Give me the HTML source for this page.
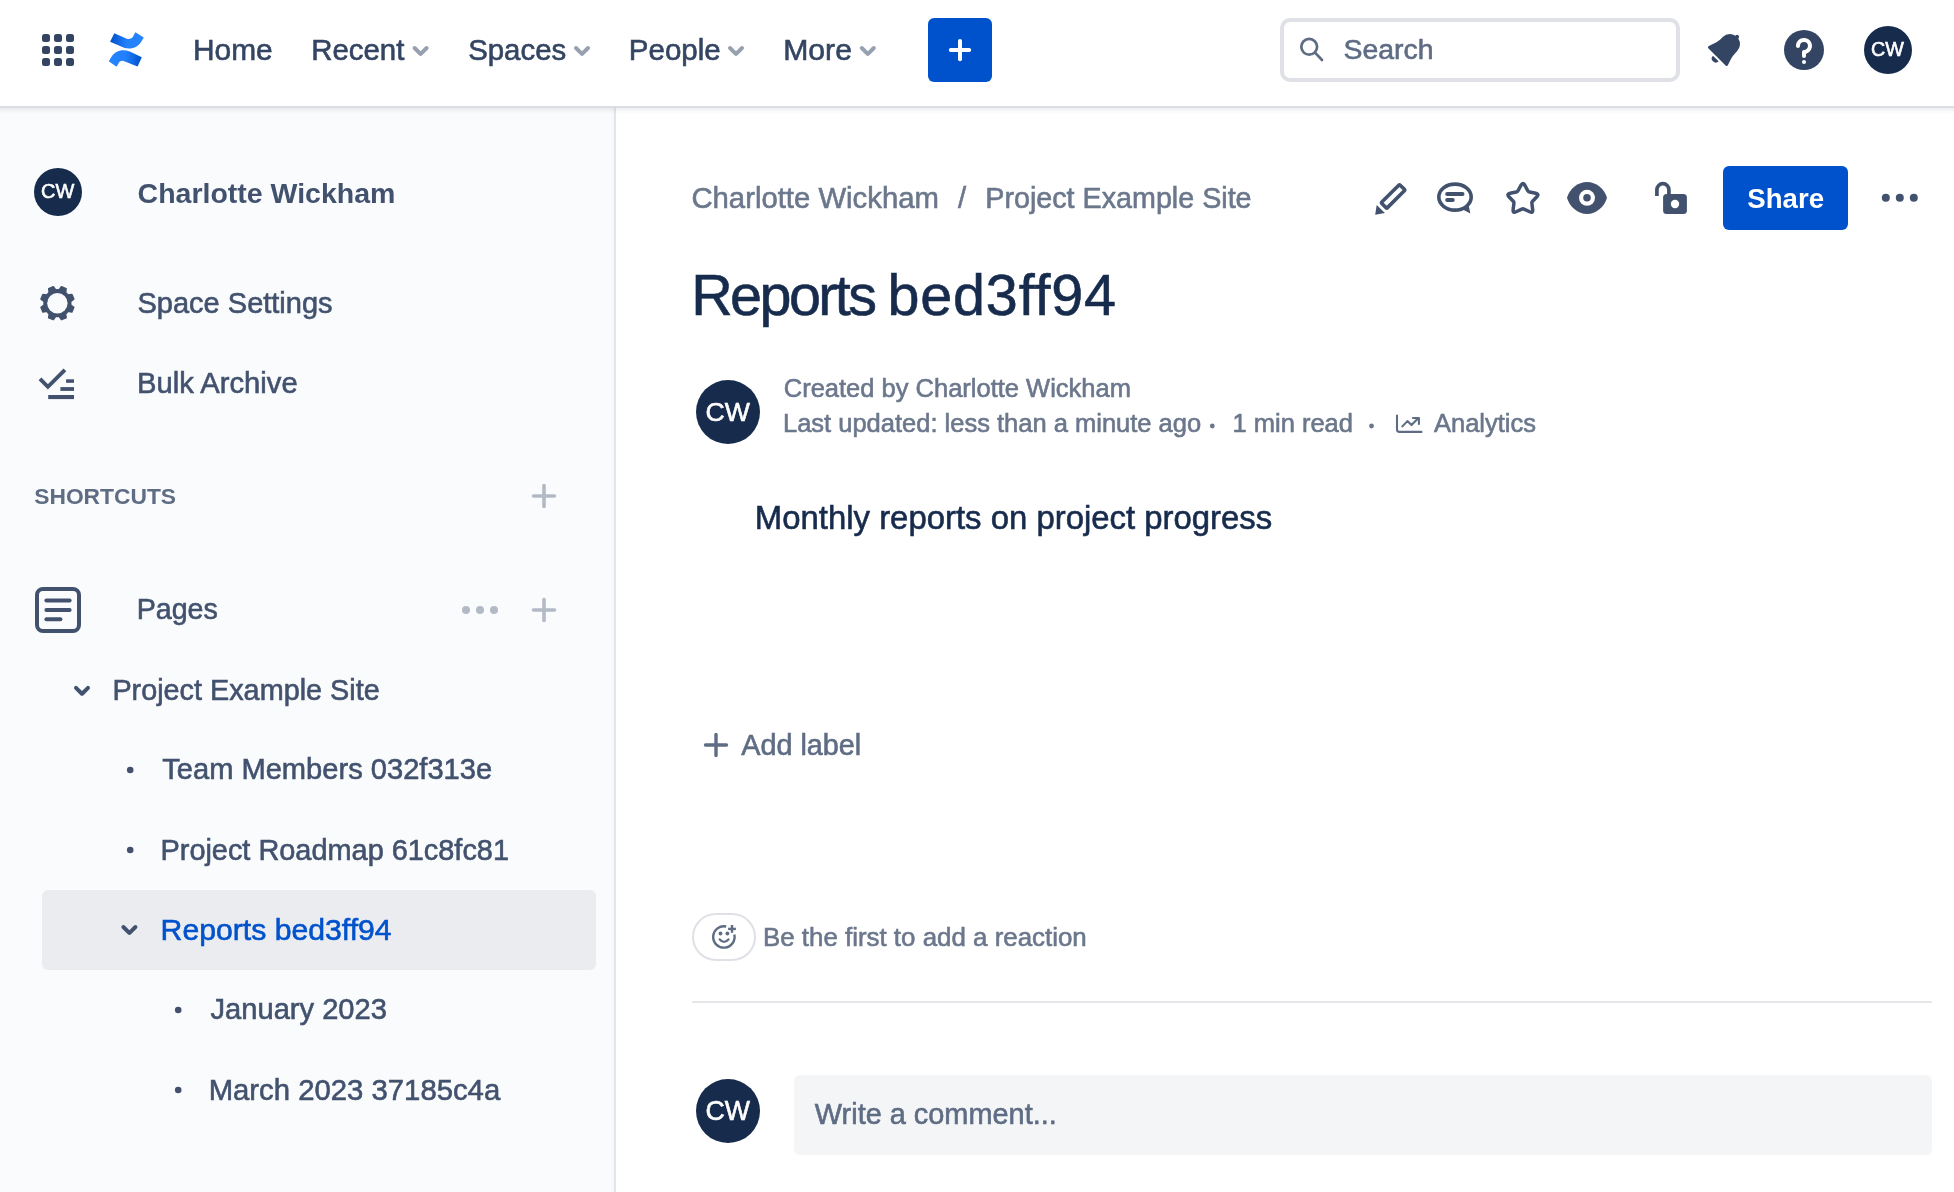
<!DOCTYPE html>
<html><head><meta charset="utf-8">
<style>
html,body{margin:0;padding:0;}
body{width:1954px;height:1192px;overflow:hidden;position:relative;background:#fff;font-family:"Liberation Sans",sans-serif;}
.t{position:absolute;white-space:nowrap;line-height:1;-webkit-text-stroke:0.6px currentColor;}
#txt{position:absolute;left:0;top:0;width:1954px;height:1192px;will-change:transform;}
.blk{position:absolute;}
#hdr{left:0;top:0;width:1954px;height:106px;background:#fff;}
#hdrline{left:0;top:106px;width:1954px;height:2px;background:#dadde3;}
#hdrshadow{left:0;top:108px;width:1954px;height:6px;background:linear-gradient(rgba(9,30,66,0.07),rgba(9,30,66,0));z-index:2;}
#side{left:0;top:108px;width:614px;height:1084px;background:#fafbfc;}
#sideline{left:614px;top:108px;width:2px;height:1084px;background:#e4e5e8;}
#sideshadow{left:610px;top:108px;width:4px;height:1084px;background:linear-gradient(to right,rgba(9,30,66,0),rgba(9,30,66,0.025));}
#sel{left:42px;top:890px;width:554px;height:80px;background:#ebecf0;border-radius:6px;}
#plusbtn{left:928px;top:18px;width:64px;height:64px;background:#0052cc;border-radius:6px;}
#search{left:1280px;top:18px;width:392px;height:56px;border:4px solid #dfe1e6;border-radius:10px;background:#fff;}
#share{left:1723px;top:166px;width:125px;height:64px;background:#0052cc;border-radius:6px;}
#react{left:692px;top:913px;width:60px;height:44px;border:2px solid #dfe1e6;border-radius:24px;}
#divider{left:692px;top:1001px;width:1240px;height:2px;background:#e4e6ea;}
#cbox{left:794px;top:1075px;width:1138px;height:80px;background:#f4f5f7;border-radius:6px;}
.av{position:absolute;border-radius:50%;background:#172b4d;color:#fff;text-align:center;font-family:"Liberation Sans",sans-serif;}
svg{position:absolute;left:0;top:0;}
</style></head><body>
<div class="blk" id="hdr"></div>
<div class="blk" id="hdrline"></div>
<div class="blk" id="side"></div>
<div class="blk" id="sideshadow"></div>
<div class="blk" id="sideline"></div>
<div class="blk" id="hdrshadow"></div>
<div class="blk" id="sel"></div>
<div class="blk" id="plusbtn"></div>
<div class="blk" id="search"></div>
<div class="blk" id="share"></div>
<div class="blk" id="react"></div>
<div class="blk" id="divider"></div>
<div class="blk" id="cbox"></div>

<svg width="1954" height="1192" viewBox="0 0 1954 1192">
<defs>
<linearGradient id="lgA" x1="111" y1="38" x2="143" y2="40" gradientUnits="userSpaceOnUse"><stop offset="0" stop-color="#0052cc"/><stop offset="0.5" stop-color="#2380fb"/><stop offset="1" stop-color="#2684ff"/></linearGradient>
<linearGradient id="lgB" x1="141" y1="62" x2="109" y2="58" gradientUnits="userSpaceOnUse"><stop offset="0" stop-color="#0052cc"/><stop offset="0.5" stop-color="#2380fb"/><stop offset="1" stop-color="#2684ff"/></linearGradient>
</defs>
<!-- apps grid -->
<g fill="#344563">
<rect x="42" y="34" width="8" height="8" rx="2.5"/><rect x="54" y="34" width="8" height="8" rx="2.5"/><rect x="66" y="34" width="8" height="8" rx="2.5"/>
<rect x="42" y="46" width="8" height="8" rx="2.5"/><rect x="54" y="46" width="8" height="8" rx="2.5"/><rect x="66" y="46" width="8" height="8" rx="2.5"/>
<rect x="42" y="58" width="8" height="8" rx="2.5"/><rect x="54" y="58" width="8" height="8" rx="2.5"/><rect x="66" y="58" width="8" height="8" rx="2.5"/>
</g>
<!-- logo -->
<path fill="url(#lgA)" d="M110.1,41.65 L114.3,33.2 L126.2,38.4 C129.5,39.6 131.8,38.6 133.2,36.2 L135.4,32.2 L143.7,37.6 L141.2,41.8 C138,46.8 132.5,49.8 124.7,48.1 Z"/>
<path fill="url(#lgB)" d="M108.8,61.2 L116.5,66.7 L118.6,63.2 C119.8,61.2 121.5,60.4 123.5,61.1 L137.6,66.4 L141.8,57.2 L129.8,51.6 C123,48.8 115.5,50 111,57.4 Z"/>
<!-- nav chevrons -->
<g fill="#97a0af">
<path transform="translate(396.6,26) scale(2)" d="M8.292 10.293a1.009 1.009 0 0 0 0 1.419l2.939 2.965c.218.215.5.322.779.322s.556-.107.769-.322l2.93-2.955a1.01 1.01 0 0 0 0-1.419.987.987 0 0 0-1.406 0l-2.298 2.317-2.307-2.327a.99.99 0 0 0-1.406 0z"/>
<path transform="translate(558,26) scale(2)" d="M8.292 10.293a1.009 1.009 0 0 0 0 1.419l2.939 2.965c.218.215.5.322.779.322s.556-.107.769-.322l2.93-2.955a1.01 1.01 0 0 0 0-1.419.987.987 0 0 0-1.406 0l-2.298 2.317-2.307-2.327a.99.99 0 0 0-1.406 0z"/>
<path transform="translate(712,26) scale(2)" d="M8.292 10.293a1.009 1.009 0 0 0 0 1.419l2.939 2.965c.218.215.5.322.779.322s.556-.107.769-.322l2.93-2.955a1.01 1.01 0 0 0 0-1.419.987.987 0 0 0-1.406 0l-2.298 2.317-2.307-2.327a.99.99 0 0 0-1.406 0z"/>
<path transform="translate(843.8,26) scale(2)" d="M8.292 10.293a1.009 1.009 0 0 0 0 1.419l2.939 2.965c.218.215.5.322.779.322s.556-.107.769-.322l2.93-2.955a1.01 1.01 0 0 0 0-1.419.987.987 0 0 0-1.406 0l-2.298 2.317-2.307-2.327a.99.99 0 0 0-1.406 0z"/>
</g>
<!-- plus in create button -->
<g stroke="#fff" stroke-width="4" stroke-linecap="round"><line x1="960" y1="40.9" x2="960" y2="59.2"/><line x1="950.8" y1="50" x2="969.2" y2="50"/></g>
<!-- search icon -->
<g fill="none" stroke="#5e6c84" stroke-width="2.7"><circle cx="1309.2" cy="46.8" r="7.9"/><line x1="1315" y1="52.6" x2="1322" y2="60" stroke-linecap="round"/></g>
<!-- bell -->
<path fill="#344563" transform="translate(1700,26) scale(2)" d="M6.485 17.669a2.001 2.001 0 0 0 2.829 0l-2.829-2.829a2 2 0 0 0 0 2.829m4.897-12.191l-.725.725c-.782.782-2.21 1.813-3.206 2.311l-3.017 1.509c-.495.248-.584.774-.187 1.171l8.556 8.556c.398.396.922.313 1.171-.188l1.508-3.017c.494-.988 1.526-2.42 2.311-3.205l.725-.726a5.048 5.048 0 0 0 .64-6.356 1.01 1.01 0 1 0-1.354-1.494c-.023.025-.046.049-.066.075a5.043 5.043 0 0 0-2.788-.84 5.036 5.036 0 0 0-3.588 1.479"/>
<!-- help -->
<g transform="translate(1780,26) scale(2)">
<circle fill="#344563" cx="12" cy="12" r="10"/><circle fill="#fff" cx="12" cy="18" r="1"/>
<path fill="#fff" d="M15.89 9.05a3.975 3.975 0 0 0-2.957-2.942C10.321 5.514 8.017 7.446 8 9.95l.005.147a.992.992 0 0 0 .982.904c.552 0 1-.447 1.002-.998a2.004 2.004 0 0 1 4.007-.002c0 1.102-.898 2-2.003 2H12a1 1 0 0 0-1 .987v2.014a1.001 1.001 0 0 0 2.004 0v-.782c0-.217.145-.399.35-.472A3.99 3.99 0 0 0 15.89 9.05"/>
</g>

<!-- sidebar gear -->
<g fill="#42526e" stroke="#42526e" stroke-width="1.6" stroke-linejoin="round" transform="translate(57.4,303.2)">
<circle r="14.1" stroke="none"/>
<polygon points="-3.9,-11 3.9,-11 2.5,-16.7 -2.5,-16.7" transform="rotate(22.5)"/><polygon points="-3.9,-11 3.9,-11 2.5,-16.7 -2.5,-16.7" transform="rotate(67.5)"/><polygon points="-3.9,-11 3.9,-11 2.5,-16.7 -2.5,-16.7" transform="rotate(112.5)"/><polygon points="-3.9,-11 3.9,-11 2.5,-16.7 -2.5,-16.7" transform="rotate(157.5)"/><polygon points="-3.9,-11 3.9,-11 2.5,-16.7 -2.5,-16.7" transform="rotate(202.5)"/><polygon points="-3.9,-11 3.9,-11 2.5,-16.7 -2.5,-16.7" transform="rotate(247.5)"/><polygon points="-3.9,-11 3.9,-11 2.5,-16.7 -2.5,-16.7" transform="rotate(292.5)"/><polygon points="-3.9,-11 3.9,-11 2.5,-16.7 -2.5,-16.7" transform="rotate(337.5)"/>
<circle r="10.2" fill="#fafbfc" stroke="none"/>
</g>
<!-- bulk archive -->
<g fill="none" stroke="#42526e" stroke-width="3.9">
<polyline points="40,378.9 47.9,386.8 64.9,369.9"/>
</g>
<g fill="#42526e">
<rect x="66.1" y="379.3" width="7.9" height="3.5"/>
<rect x="60.4" y="387.1" width="13.6" height="3.8"/>
<rect x="48.2" y="395" width="25.8" height="4.1"/>
</g>
<!-- shortcuts plus -->
<g stroke="#b3bac5" stroke-width="3.6" stroke-linecap="round">
<line x1="544" y1="485.5" x2="544" y2="506.5"/><line x1="533.5" y1="496" x2="554.5" y2="496"/>
<line x1="544" y1="599.5" x2="544" y2="620.5"/><line x1="533.5" y1="610" x2="554.5" y2="610"/>
</g>
<g fill="#b3bac5"><circle cx="466" cy="610" r="4"/><circle cx="480" cy="610" r="4"/><circle cx="494" cy="610" r="4"/></g>
<!-- pages icon -->
<rect x="37" y="589" width="42" height="42" rx="6" fill="none" stroke="#42526e" stroke-width="4"/>
<g stroke="#42526e" stroke-width="4" stroke-linecap="round">
<line x1="46.4" y1="600.4" x2="69.6" y2="600.4"/><line x1="46.4" y1="609.9" x2="69.6" y2="609.9"/><line x1="46.4" y1="619.2" x2="60.4" y2="619.2"/>
</g>
<!-- tree chevrons -->
<g fill="#42526e">
<path transform="translate(58,665.8) scale(2)" d="M8.292 10.293a1.009 1.009 0 0 0 0 1.419l2.939 2.965c.218.215.5.322.779.322s.556-.107.769-.322l2.93-2.955a1.01 1.01 0 0 0 0-1.419.987.987 0 0 0-1.406 0l-2.298 2.317-2.307-2.327a.99.99 0 0 0-1.406 0z"/>
<path transform="translate(105.4,905) scale(2)" d="M8.292 10.293a1.009 1.009 0 0 0 0 1.419l2.939 2.965c.218.215.5.322.779.322s.556-.107.769-.322l2.93-2.955a1.01 1.01 0 0 0 0-1.419.987.987 0 0 0-1.406 0l-2.298 2.317-2.307-2.327a.99.99 0 0 0-1.406 0z"/>
<circle cx="130.2" cy="770" r="3.3"/><circle cx="130.2" cy="850" r="3.3"/>
<circle cx="178.2" cy="1010" r="3.3"/><circle cx="178.2" cy="1090" r="3.3"/>
</g>

<!-- page action icons -->
<g fill="#42526e">
<!-- pencil -->
<rect x="-12.95" y="-3.95" width="25.9" height="7.9" rx="1" transform="translate(1393.1,196.4) rotate(-45)" fill="none" stroke="#42526e" stroke-width="3.6"/>
<polygon points="1376.7,205 1384.9,212.9 1375.2,214.7"/>
<!-- comment -->
<ellipse cx="1455" cy="197.1" rx="16.2" ry="13" fill="none" stroke="#42526e" stroke-width="3.6"/>
<polygon points="1461,208.6 1470.3,213.5 1468.5,204.5"/>
<!-- eye -->
<path d="M1567,197.8 C1569.5,188.5 1578,182 1587,182 C1596,182 1604.5,188.5 1607,197.8 C1604.5,207.1 1596,214 1587,214 C1578,214 1569.5,207.1 1567,197.8 Z"/>
<circle cx="1587" cy="197.8" r="8" fill="#fff"/><circle cx="1587" cy="197.8" r="3.8"/>
<!-- unlock body -->
<rect x="1663.1" y="194.1" width="23.8" height="19.8" rx="3.5"/>
<circle cx="1675" cy="204" r="4.2" fill="#fff"/>
<!-- dots -->
<circle cx="1885.8" cy="197.8" r="4"/><circle cx="1899.8" cy="197.8" r="4"/><circle cx="1913.8" cy="197.8" r="4"/>
</g>
<g stroke="#42526e" stroke-width="3.8" stroke-linecap="round" fill="none">
<line x1="1447.1" y1="194" x2="1462.6" y2="194"/><line x1="1447.1" y1="200" x2="1452.8" y2="200"/>
</g>
<path d="M14.3,38.3" fill="none"/>
<path id="star" fill="none" stroke="#42526e" stroke-width="3.5" stroke-linejoin="round" d="M1521.06,185.22 Q1522.90,181.90 1524.74,185.22 L1527.79,190.73 Q1528.37,191.78 1529.54,192.00 L1535.72,193.20 Q1539.45,193.92 1536.86,196.70 L1532.56,201.30 Q1531.74,202.17 1531.89,203.36 L1532.66,209.61 Q1533.13,213.38 1529.68,211.77 L1523.99,209.11 Q1522.90,208.60 1521.81,209.11 L1516.12,211.77 Q1512.67,213.38 1513.14,209.61 L1513.91,203.36 Q1514.06,202.17 1513.24,201.30 L1508.94,196.70 Q1506.35,193.92 1510.08,193.20 L1516.26,192.00 Q1517.43,191.78 1518.01,190.73 Z"/>
<path d="M1656.9,196 V189.7 A6,6 0 0 1 1668.9,189.7 V195" fill="none" stroke="#42526e" stroke-width="3.7"/>
<!-- analytics -->
<g fill="none" stroke="#5e6c84" stroke-width="2.1" stroke-linecap="round" stroke-linejoin="round">
<path d="M1397,415.5 V429.5 Q1397,431.9 1399.4,431.9 H1421.5"/>
<path d="M1402.4,426.4 L1407.4,421.1 L1411.5,425.1 L1417.9,418.4"/>
<path d="M1413,418 H1418.9 V423.9"/>
</g>
<!-- meta dots -->
<g fill="#6b778c"><circle cx="1212.3" cy="426" r="2.4"/><circle cx="1371.5" cy="426" r="2.4"/></g>
<!-- add label plus -->
<g stroke="#5e6c84" stroke-width="3.4" stroke-linecap="round"><line x1="716" y1="734.5" x2="716" y2="755.5"/><line x1="705.5" y1="745" x2="726.5" y2="745"/></g>
<!-- emoji -->
<g fill="none" stroke="#5e6c84" stroke-width="2.4" stroke-linecap="butt">
<path d="M734.3,934.5 A10.7,10.7 0 1 1 726.2,926.5"/>
<path d="M719.8,939.5 Q724,944.3 728.4,939.5" stroke-linecap="round"/>
<line x1="732" y1="925" x2="732" y2="932.8"/><line x1="728.1" y1="928.9" x2="735.9" y2="928.9"/>
</g>
<g fill="#5e6c84"><circle cx="720.5" cy="933.5" r="1.9"/><circle cx="727.4" cy="933.5" r="1.9"/></g>
</svg>

<div class="av" style="left:1864px;top:26px;width:48px;height:48px;"></div>
<div class="av" style="left:34px;top:168px;width:48px;height:48px;"></div>
<div class="av" style="left:696px;top:380px;width:64px;height:64px;"></div>
<div class="av" style="left:696px;top:1079px;width:64px;height:64px;"></div>
<div id="txt"><div class="t" style="left:193.01px;top:34.88px;font-size:29.9px;color:#344563;">Home</div>
<div class="t" style="left:311.25px;top:35.31px;font-size:29.4px;color:#344563;">Recent</div>
<div class="t" style="left:468.18px;top:35.31px;font-size:29.4px;color:#344563;">Spaces</div>
<div class="t" style="left:628.84px;top:35.22px;font-size:29.5px;color:#344563;">People</div>
<div class="t" style="left:783.18px;top:34.63px;font-size:30.2px;color:#344563;">More</div>
<div class="t" style="left:1343.52px;top:34.95px;font-size:28.4px;color:#5e6c84;">Search</div>
<div class="t" style="left:137.56px;top:179.07px;font-size:28.5px;color:#42526e;font-weight:bold;-webkit-text-stroke:0;">Charlotte Wickham</div>
<div class="t" style="left:137.50px;top:288.95px;font-size:29.0px;color:#42526e;">Space Settings</div>
<div class="t" style="left:137.06px;top:369.28px;font-size:29.2px;color:#42526e;">Bulk Archive</div>
<div class="t" style="left:34.22px;top:485.10px;font-size:22.8px;color:#5e6c84;font-weight:bold;-webkit-text-stroke:0;">SHORTCUTS</div>
<div class="t" style="left:136.71px;top:595.38px;font-size:28.6px;color:#42526e;">Pages</div>
<div class="t" style="left:112.40px;top:675.52px;font-size:28.8px;color:#42526e;">Project Example Site</div>
<div class="t" style="left:162.22px;top:755.36px;font-size:29.1px;color:#42526e;">Team Members 032f313e</div>
<div class="t" style="left:160.49px;top:835.83px;font-size:28.9px;color:#42526e;">Project Roadmap 61c8fc81</div>
<div class="t" style="left:160.58px;top:915.23px;font-size:30.2px;color:#0052cc;">Reports bed3ff94</div>
<div class="t" style="left:210.56px;top:995.36px;font-size:29.1px;color:#42526e;">January 2023</div>
<div class="t" style="left:208.66px;top:1075.19px;font-size:29.3px;color:#42526e;">March 2023 37185c4a</div>
<div class="t" style="left:691.43px;top:183.19px;font-size:29.3px;color:#6b778c;">Charlotte Wickham</div>
<div class="t" style="left:957.90px;top:183.19px;font-size:29.3px;color:#6b778c;">/</div>
<div class="t" style="left:985.30px;top:183.70px;font-size:28.7px;color:#6b778c;">Project Example Site</div>
<div class="t" style="left:691.20px;top:267.31px;font-size:57.5px;color:#172b4d;letter-spacing:-2.590px;">Reports</div>
<div class="t" style="left:887.46px;top:267.31px;font-size:57.5px;color:#172b4d;letter-spacing:0.821px;">bed3ff94</div>
<div class="t" style="left:1747.37px;top:184.73px;font-size:27.6px;color:#ffffff;font-weight:bold;-webkit-text-stroke:0;">Share</div>
<div class="t" style="left:783.73px;top:375.51px;font-size:25.5px;color:#6b778c;">Created by Charlotte Wickham</div>
<div class="t" style="left:782.96px;top:411.41px;font-size:25.5px;color:#6b778c;">Last updated: less than a minute ago</div>
<div class="t" style="left:1232.49px;top:411.21px;font-size:25.5px;color:#6b778c;">1 min read</div>
<div class="t" style="left:1434.00px;top:411.41px;font-size:25.5px;color:#6b778c;">Analytics</div>
<div class="t" style="left:754.87px;top:501.54px;font-size:32.9px;color:#172b4d;">Monthly reports on project progress</div>
<div class="t" style="left:741.20px;top:730.92px;font-size:28.8px;color:#5e6c84;">Add label</div>
<div class="t" style="left:762.93px;top:925.07px;font-size:25.9px;color:#6b778c;">Be the first to add a reaction</div>
<div class="t" style="left:814.86px;top:1100.03px;font-size:28.9px;color:#5e6c84;">Write a comment...</div>
<div class="t" style="left:1871.02px;top:39.93px;font-size:19.69px;color:#ffffff;">CW</div>
<div class="t" style="left:41.10px;top:182.22px;font-size:19.94px;color:#ffffff;">CW</div>
<div class="t" style="left:705.47px;top:399.44px;font-size:26.65px;color:#ffffff;">CW</div>
<div class="t" style="left:705.56px;top:1097.98px;font-size:26.71px;color:#ffffff;">CW</div>
</div>
</body></html>
